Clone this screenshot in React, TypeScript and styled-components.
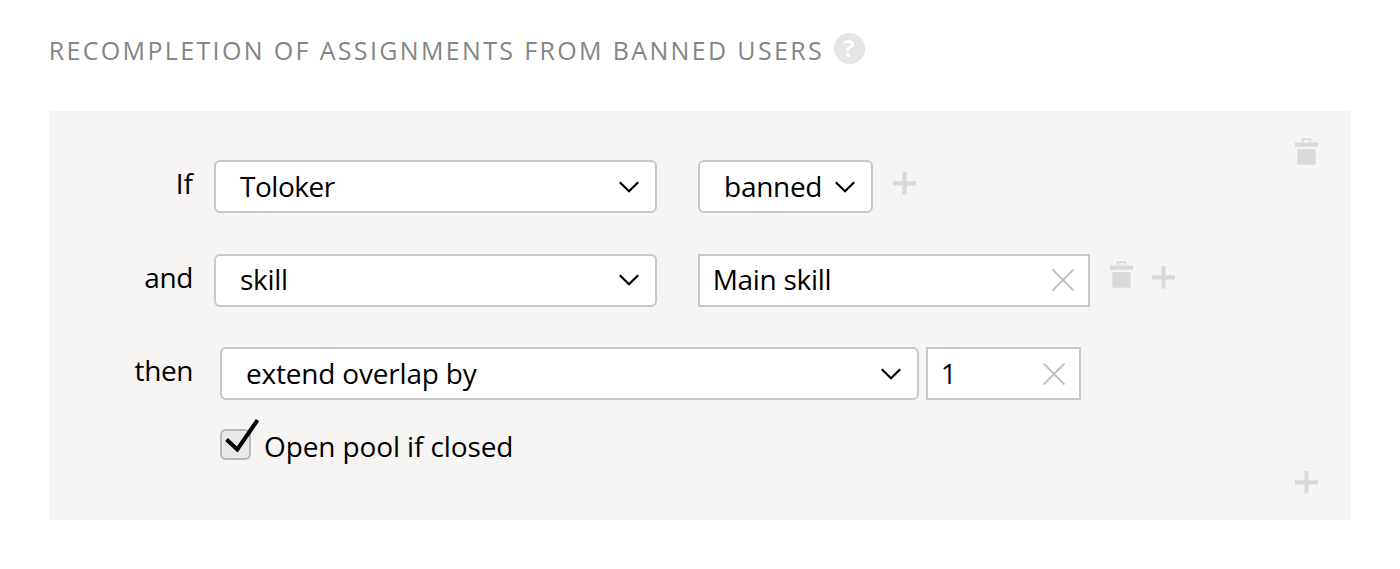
import React from "react";
import styled, { createGlobalStyle } from "styled-components";

const GlobalStyle = createGlobalStyle`
  * { box-sizing: border-box; }
  body { margin: 0; background: #fff; color: #000; font-family: "Open Sans", "Noto Sans", sans-serif; }
`;

const Page = styled.main`
  height: 569px;
  padding: 31px 49px 0;
`;

const Header = styled.header`
  display: flex;
  align-items: center;
  height: 36px;
  margin-bottom: 44px;
`;

const Title = styled.h1`
  margin: 2px 0 0;
  width: 784.5px;
  font-size: 25px;
  line-height: 36px;
  font-weight: 400;
  letter-spacing: 2.35px;
  text-indent: -0.3px;
  color: #858585;
  white-space: nowrap;
`;

const Help = styled.span`
  width: 31px;
  height: 31px;
  margin-bottom: 1px;
  border-radius: 50%;
  background: #e5e5e5;
  color: #fff;
  font-size: 23px;
  font-weight: 700;
  line-height: 31px;
  text-align: center;
`;

const Panel = styled.section`
  display: flex;
  justify-content: space-between;
  height: 409px;
  padding: 49px 33px 0 0;
  background: #f6f5f3;
`;

const Rules = styled.div`
  display: flex;
  flex-direction: column;
`;

const Row = styled.div<{ $gap?: number }>`
  display: flex;
  height: 53px;
  margin-bottom: ${(p) => p.$gap ?? 40.5}px;
`;

const Text = styled.span<{ $spacing: number }>`
  font-size: 28px;
  line-height: 38px;
  letter-spacing: ${(p) => p.$spacing}px;
  white-space: nowrap;
`;

const Label = styled(Text)`
  width: 144px;
  margin-right: 20.7px;
  padding-top: 4.4px;
  text-align: right;
`;

const Field = styled.div<{ $width: number; $left?: number }>`
  display: flex;
  align-items: center;
  justify-content: space-between;
  flex: none;
  width: ${(p) => p.$width}px;
  height: 53px;
  margin-left: ${(p) => p.$left ?? 0}px;
  border: 2px solid #c8c8c8;
  background: #fff;

  & > ${Text} {
    padding-bottom: 2px;
  }
`;

const Select = styled(Field)`
  padding: 0 16px 0 24.4px;
  border-radius: 6px;
`;

const Input = styled(Field)`
  padding: 0 14px 0 13px;
`;

const Actions = styled.div`
  display: flex;
  gap: 19px;
  padding: 6px 0 0 20px;
`;

const PanelActions = styled.div`
  display: flex;
  flex-direction: column;
  justify-content: space-between;
  height: 362px;
  margin-top: -23px;
`;

const Option = styled.label`
  display: flex;
  align-items: flex-start;
  padding-left: 171px;
  margin-top: 29px;
`;

const Box = styled.span`
  position: relative;
  width: 31px;
  height: 31px;
  margin-right: 13px;
  border: 2px solid #b9b8b7;
  border-radius: 6px;
  background: #e8e8e6;
`;

const Mark = styled.svg`
  position: absolute;
  left: -2px;
  top: -14px;
`;

const OptionText = styled(Text)`
  margin-top: -2px;
`;

const Chevron = () => (
  <svg width="20" height="12" viewBox="0 0 20 12" fill="none" stroke="#000" strokeWidth="2.3">
    <path d="M.8 1.2 10 10.2 19.2 1.2" />
  </svg>
);

const Clear = () => (
  <svg width="22" height="22" viewBox="0 0 22 22" fill="none" stroke="#bdbdbd" strokeWidth="1.9">
    <path d="M.5.5l21 21M21.5.5l-21 21" />
  </svg>
);

const Plus = () => (
  <svg width="23" height="34" viewBox="0 0 23 34" fill="#d9d9d8">
    <path d="M9.4 6h4.2v9.2h9.4v4.2h-9.4v9h-4.2v-9H0v-4.2h9.4z" />
  </svg>
);

const Trash = () => (
  <svg width="23" height="34" viewBox="0 0 23 34">
    <path d="M7.8 5V2.2h7.6V5" fill="none" stroke="#d9d9d8" strokeWidth="1.8" />
    <path d="M0 5.5h23v4.3H0zM2.3 12h18.3v15.7H2.3z" fill="#d9d9d8" />
  </svg>
);

export default function App() {
  return (
    <>
      <GlobalStyle />
      <Page>
        <Header>
          <Title>RECOMPLETION OF ASSIGNMENTS FROM BANNED USERS</Title>
          <Help>?</Help>
        </Header>
        <Panel>
          <Rules>
            <Row>
              <Label $spacing={0}>If</Label>
              <Select $width={443.5}>
                <Text $spacing={-0.5}>Toloker</Text>
                <Chevron />
              </Select>
              <Select $width={175} $left={40.5}>
                <Text $spacing={-0.3}>banned</Text>
                <Chevron />
              </Select>
              <Actions>
                <Plus />
              </Actions>
            </Row>
            <Row>
              <Label $spacing={-0.4}>and</Label>
              <Select $width={443.5}>
                <Text $spacing={-0.3}>skill</Text>
                <Chevron />
              </Select>
              <Input $width={392} $left={40.5}>
                <Text $spacing={-0.3}>Main skill</Text>
                <Clear />
              </Input>
              <Actions>
                <Trash />
                <Plus />
              </Actions>
            </Row>
            <Row $gap={0}>
              <Label $spacing={-0.4}>then</Label>
              <Select $width={699.5} $left={6}>
                <Text $spacing={-0.2}>extend overlap by</Text>
                <Chevron />
              </Select>
              <Input $width={155} $left={6.5}>
                <Text $spacing={0}>1</Text>
                <Clear />
              </Input>
            </Row>
            <Option>
              <Box>
                <Mark width="42" height="42" viewBox="0 0 42 42" fill="none" stroke="#000" strokeWidth="4">
                  <path d="M6.5 22.5 17.3 32.5 37.5 3.2" />
                </Mark>
              </Box>
              <OptionText $spacing={-0.12}>Open pool if closed</OptionText>
            </Option>
          </Rules>
          <PanelActions>
            <Trash />
            <Plus />
          </PanelActions>
        </Panel>
      </Page>
    </>
  );
}
